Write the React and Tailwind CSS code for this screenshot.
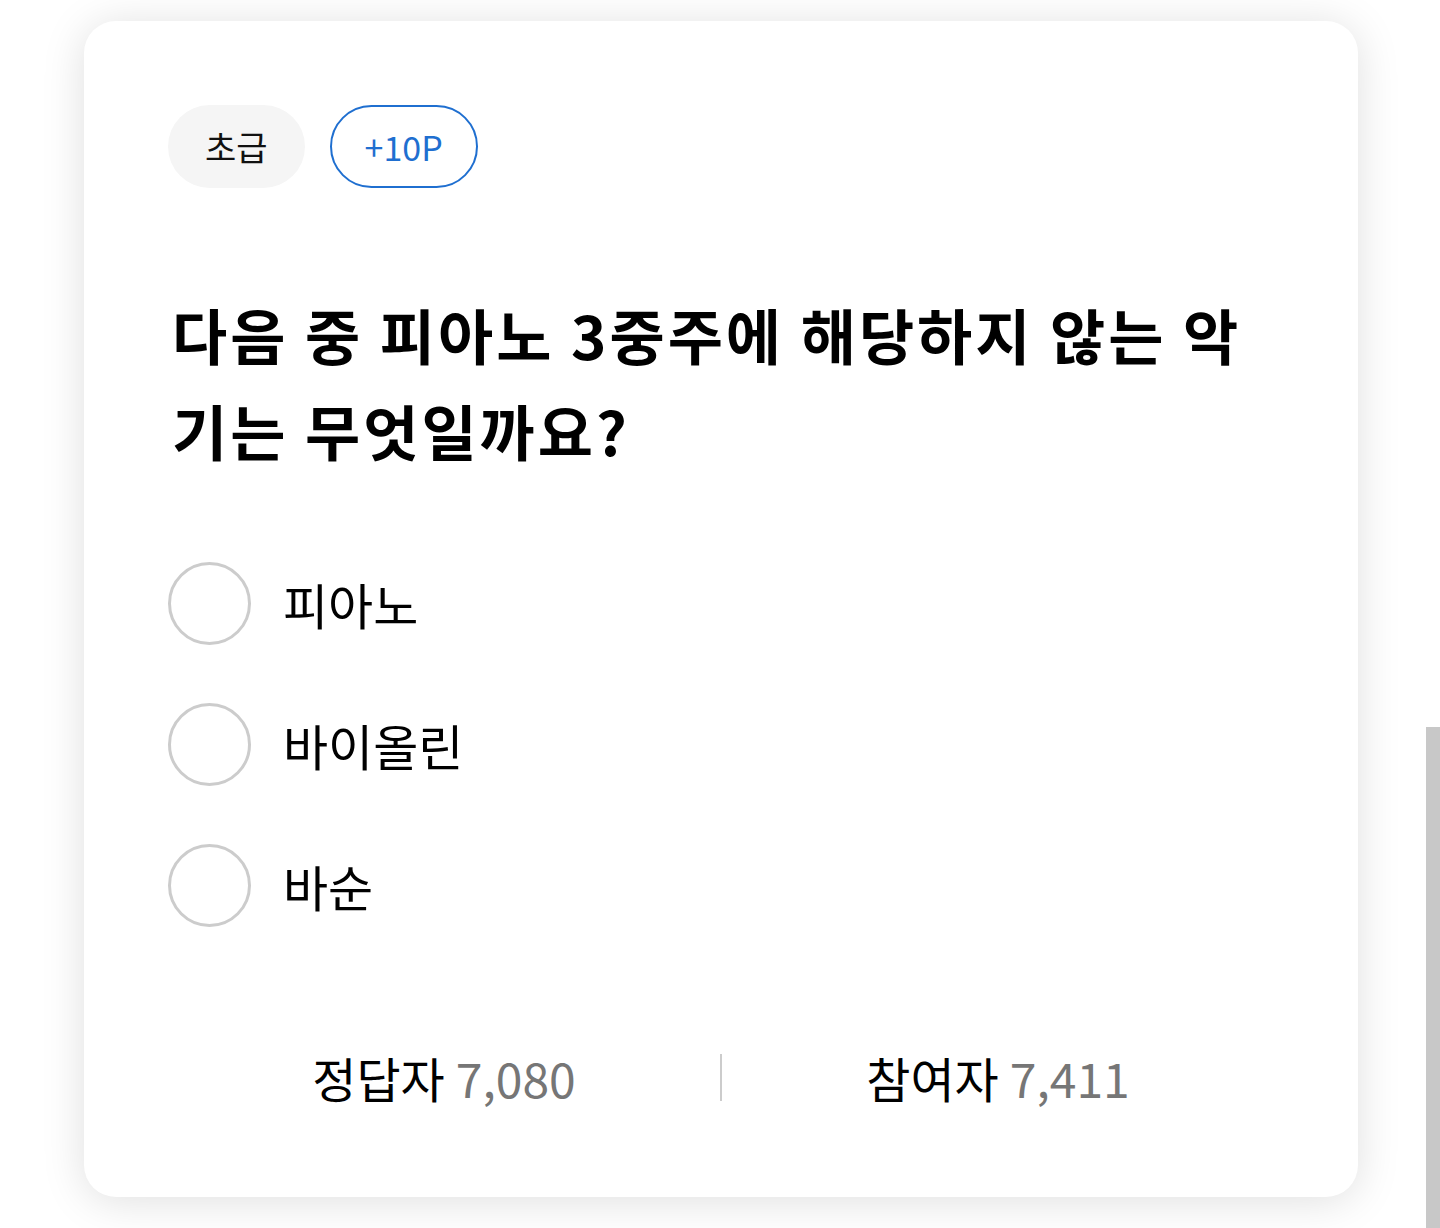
import React from 'react';

const FONT = { fontFamily: '"Noto Sans CJK KR", "Noto Sans", sans-serif' };

const options = ['피아노', '바이올린', '바순'];

function Stat({ label, value }) {
  return (
    <div className="flex flex-1 items-center justify-center gap-[11px] text-[48px] leading-none">
      <span className="text-black">{label}</span>
      <span className="text-[#767676]">{value}</span>
    </div>
  );
}

export default function App() {
  return (
    <div className="relative h-[1228px] w-[1440px] overflow-hidden bg-white" style={FONT}>
      <div className="ml-[84px] mt-[21px] flex h-[1176px] w-[1274px] flex-col rounded-[32px] bg-white px-[84px] pt-[84px] shadow-[0_4px_44px_rgba(0,0,0,0.13)]">
        <div className="flex gap-[25px]">
          <span className="flex h-[83px] items-center rounded-full bg-[#f5f5f5] px-[37px] text-[34px] text-[#111]">초급</span>
          <span className="flex h-[83px] items-center rounded-full border-[2.5px] border-[#1f6fd0] px-[33px] text-[34px] text-[#1f6fd0]">+10P</span>
        </div>

        <h1 className="mt-[98px] pl-[4px] text-[60px] font-bold leading-[96px] tracking-[3px] text-black">
          다음 중 피아노 3중주에 해당하지 않는 악<br />기는 무엇일까요?
        </h1>

        <ul className="mt-[84px] flex flex-col gap-[58px]">
          {options.map((o) => (
            <li key={o} className="flex items-center gap-[32px]">
              <span className="h-[83px] w-[83px] rounded-full border-[3px] border-[#cccccc]" />
              <span className="text-[49px] leading-none text-black">{o}</span>
            </li>
          ))}
        </ul>

        <div className="mt-[126px] flex items-center">
          <Stat label="정답자" value="7,080" />
          <span className="h-[47px] w-[2px] bg-[#cccccc]" />
          <Stat label="참여자" value="7,411" />
        </div>
      </div>
      <div className="absolute right-0 top-[727px] h-[501px] w-[14px] bg-[#c8c8c8]" />
    </div>
  );
}
